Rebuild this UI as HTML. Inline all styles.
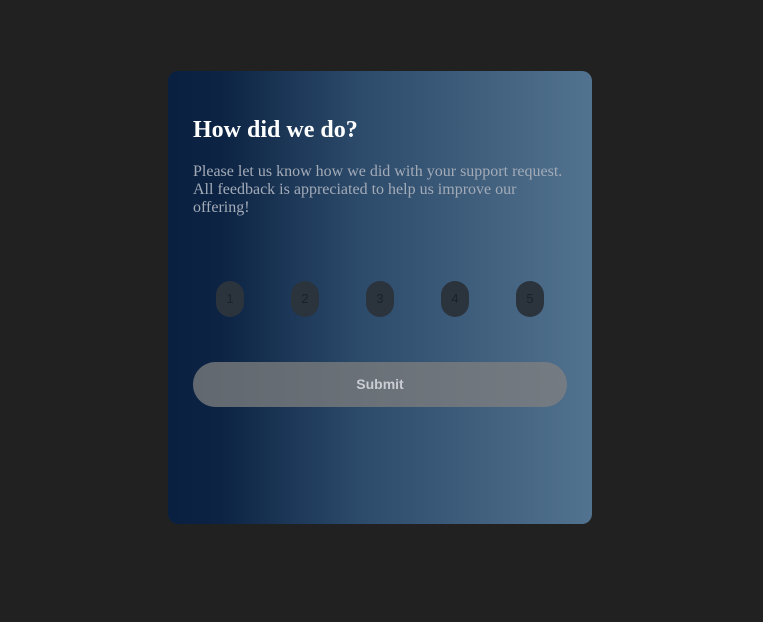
<!DOCTYPE html>
<html><head><meta charset="utf-8"><style>
html,body{margin:0;padding:0;width:763px;height:622px;background:#212121;overflow:hidden}
.card{position:absolute;left:168px;top:71px;width:424px;height:453px;border-radius:10px;
background:linear-gradient(to right,#0a2040 0%,#0c2343 12%,#2c4a6a 45%,#52738f 100%);}
h1{position:absolute;left:25px;top:45px;margin:0;font:bold 24px "Liberation Serif",serif;color:#fff;line-height:28px}
p{position:absolute;left:25px;top:92px;width:380px;margin:0;font:16px "Liberation Serif",serif;color:#a3abb7;line-height:18px}
.c{position:absolute;top:210px;width:28px;height:36px;border-radius:14px;background:#2b333d;color:#18212c;
font:13px "Liberation Sans",sans-serif;text-align:center;line-height:36px}
.btn{position:absolute;left:25px;top:291px;width:374px;height:45px;border-radius:23px;
background:linear-gradient(to right,#62686f,#747b82);color:#c9cdd3;font:bold 14px "Liberation Sans",sans-serif;text-align:center;line-height:45px}
</style></head><body>
<div class="card">
<h1>How did we do?</h1>
<p>Please let us know how we did with your support request. All feedback is appreciated to help us improve our offering!</p>
<div class="c" style="left:48px">1</div>
<div class="c" style="left:123px">2</div>
<div class="c" style="left:198px">3</div>
<div class="c" style="left:273px">4</div>
<div class="c" style="left:348px">5</div>
<div class="btn">Submit</div>
</div>
</body></html>
